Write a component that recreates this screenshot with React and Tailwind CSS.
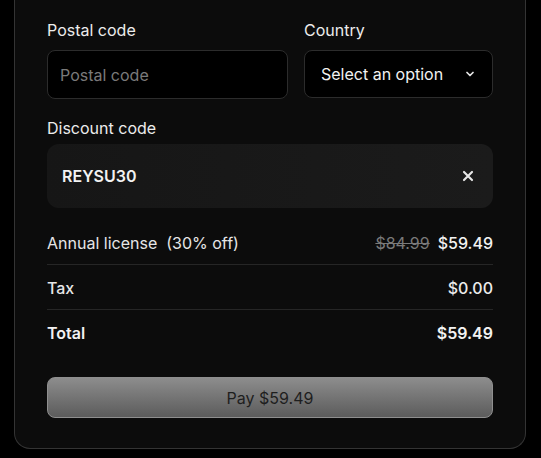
import React from 'react';

const Row = ({ label, children, last, bold }) => (
    <div className={`flex items-center justify-between pt-[11px] pb-[9px] ${last ? '' : 'border-b border-[#262626]'}`}>
        <span className={`text-base leading-6 ${bold ? 'font-semibold text-[#f2f2f2]' : 'font-medium text-[#e6e6e6]'}`}>{label}</span>
        <span className="flex items-center gap-2 text-base leading-6">{children}</span>
    </div>
);

const App = () => {
    return (
        <div className="min-h-[458px] bg-black font-['Inter',sans-serif]">
            <div className="ml-[14px] w-[512px] rounded-b-2xl border-x border-b border-[#343434] bg-[#0c0c0c] px-8 pt-[18px] pb-[30px]">
                <div className="flex items-start gap-4">
                    <div className="w-[241px]">
                        <label className="mb-2 block text-base leading-6 text-[#ececec]">Postal code</label>
                        <input
                            placeholder="Postal code"
                            className="h-[49px] w-full rounded-lg border border-[#2c2c2c] bg-black px-3 text-base text-white outline-none placeholder:text-[#7a7a7a]"
                        />
                    </div>
                    <div className="w-[189px]">
                        <label className="mb-2 block text-base leading-6 text-[#ececec]">Country</label>
                        <div className="flex h-12 w-full items-center justify-between rounded-lg border border-[#2c2c2c] bg-black pl-4 pr-4">
                            <span className="text-base text-[#f2f2f2]">Select an option</span>
                            <svg width="12" height="12" viewBox="0 0 24 24" fill="none" stroke="#e5e5e5" strokeWidth="3.5" strokeLinecap="round" strokeLinejoin="round">
                                <path d="m6 9 6 6 6-6" />
                            </svg>
                        </div>
                    </div>
                </div>

                <label className="mt-[17px] block text-base leading-6 text-[#ececec]">Discount code</label>
                <div className="mt-1 flex h-16 items-center justify-between rounded-xl bg-gradient-to-r from-[#161616] to-[#1b1b1b] pl-[15px] pr-[17px]">
                    <span className="text-base font-semibold text-[#f2f2f2]">REYSU30</span>
                    <svg width="16" height="16" viewBox="0 0 24 24" fill="none" stroke="#e6e6e6" strokeWidth="3.2" strokeLinecap="round">
                        <path d="M18 6 6 18M6 6l12 12" />
                    </svg>
                </div>

                <div className="mt-3">
                    <Row label={<span className="font-normal">Annual license&nbsp;&nbsp;(30% off)</span>}>
                        <span className="text-[#7a7a7a] line-through">$84.99</span>
                        <span className="font-medium text-[#f2f2f2]">$59.49</span>
                    </Row>
                    <Row label="Tax">
                        <span className="font-medium text-[#ececec]">$0.00</span>
                    </Row>
                    <Row label="Total" last bold>
                        <span className="font-semibold text-[#f2f2f2]">$59.49</span>
                    </Row>
                </div>

                <button className="mt-[23px] flex h-[41px] w-full items-center justify-center rounded-lg border border-[#8f8f8f] bg-gradient-to-b from-[#8d8d8d] to-[#5c5c5c] text-base text-[#1e1e1e]">
                    Pay $59.49
                </button>
            </div>
        </div>
    );
};

export default App;
